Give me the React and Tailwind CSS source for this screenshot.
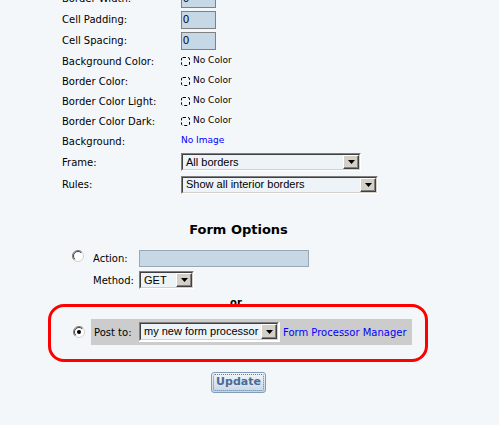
import React from "react";

const Radio = ({ checked }) => (
  <svg width="12" height="12" viewBox="0 0 12 12" className="shrink-0">
    <circle cx="6" cy="6" r="5.5" fill="#ffffff" stroke="#d4d0c8" />
    <path d="M2.1 9.9 A5.5 5.5 0 0 1 9.9 2.1" fill="none" stroke="#808080" />
    <path d="M2.8 9.2 A4.5 4.5 0 0 1 9.2 2.8" fill="none" stroke="#404040" />
    {checked && <circle cx="6" cy="6" r="2" fill="#000000" />}
  </svg>
);

const NoColor = () => (
  <span className="flex items-center gap-[3px]">
    <svg width="9" height="9" viewBox="0 0 9 9">
      <rect x="0.5" y="0.5" width="8" height="8" rx="1.5" fill="none" stroke="#000" strokeDasharray="3 2" />
    </svg>
    <span className="text-[9px]">No Color</span>
  </span>
);

const Select = ({ className, text }) => (
  <div className={`flex border border-t-[#808080] border-l-[#808080] border-b-white border-r-white ${className}`}>
    <div className="flex flex-1 items-center border border-t-[#404040] border-l-[#404040] border-b-[#d4d0c8] border-r-[#d4d0c8] bg-[#edf3f7]">
      <span className="flex-1 truncate pl-[3px] font-['Liberation_Sans',Arial,sans-serif] text-[11px] leading-none">
        {text}
      </span>
      <span className="flex h-full w-[16px] items-center justify-center border border-t-white border-l-white border-b-[#404040] border-r-[#404040] bg-[#d4d0c8] shadow-[inset_-1px_-1px_0_#808080]">
        <svg width="7" height="4" viewBox="0 0 7 4">
          <polygon points="0,0 7,0 3.5,4" fill="#000" />
        </svg>
      </span>
    </div>
  </div>
);

const NumInput = () => (
  <div className="flex h-[18px] w-[35px] items-center border border-[#808080] bg-[#c6d8e6] pl-[1px] font-['Liberation_Sans',Arial,sans-serif] text-[11px]">
    0
  </div>
);

const rows = [
  { label: "Border Width:", value: <NumInput />, h: "h-[21px]" },
  { label: "Cell Padding:", value: <NumInput />, h: "h-[21px]" },
  { label: "Cell Spacing:", value: <NumInput />, h: "h-[21px]" },
  { label: "Background Color:", value: <NoColor />, h: "h-[20px]" },
  { label: "Border Color:", value: <NoColor />, h: "h-[20px]" },
  { label: "Border Color Light:", value: <NoColor />, h: "h-[20px]" },
  { label: "Border Color Dark:", value: <NoColor />, h: "h-[20px]" },
  {
    label: "Background:",
    value: <span className="text-[9px] text-[#0000ff]">No Image</span>,
    h: "h-[20px]",
  },
  {
    label: "Frame:",
    value: <Select className="h-[18px] w-[180px]" text="All borders" />,
    h: "h-[22px]",
  },
  {
    label: "Rules:",
    value: <Select className="h-[18px] w-[197px]" text="Show all interior borders" />,
    h: "h-[23px]",
  },
];

export default function App() {
  return (
    <div className="h-[425px] w-[499px] overflow-hidden bg-[#f4f7fa] font-['DejaVu_Sans',sans-serif] text-[10px] text-black">
      <div className="mt-[-12px] w-[477px]">
        {rows.map((r) => (
          <div key={r.label} className={`flex items-center pl-[62px] ${r.h}`}>
            <span className="w-[119px]">{r.label}</span>
            {r.value}
          </div>
        ))}

        <div className="mt-[26px] h-[16px] text-center text-[13px] font-bold leading-[16px]">
          Form Options
        </div>

        <div className="mt-[12px] flex items-start pl-[72px]">
          <Radio />
          <div className="ml-[9px] flex flex-col">
            <div className="flex h-[17px] items-center">
              <span className="w-[46px]">Action:</span>
              <div className="h-[17px] w-[170px] border border-[#9aa8b4] bg-[#c6d8e6]" />
            </div>
            <div className="mt-[4px] flex h-[18px] items-center">
              <span className="w-[46px]">Method:</span>
              <Select className="h-[18px] w-[55px]" text="GET" />
            </div>
          </div>
        </div>

        <div className="mt-[8px] h-[12px] pr-[5px] text-center text-[10px] font-bold leading-[12px]">
          or
        </div>

        <div className="relative mt-[-5px] ml-[48px] flex h-[58px] w-[380px] items-center rounded-[16px] border-[3px] border-[#ff0000] pl-[22px] pb-[2px]">
          <Radio checked />
          <div className="ml-[6px] flex h-[26px] w-[321px] items-center bg-[#cccccc] pl-[3px]">
            <span className="w-[45px]">Post to:</span>
            <div className="border-r border-b border-white">
              <Select className="h-[19px] w-[140px]" text="my new form processor" />
            </div>
            <span className="ml-[3px] text-[#0000ff]">Form Processor Manager</span>
          </div>
        </div>

        <div className="mt-[10px] flex justify-center">
          <button className="flex h-[21px] w-[55px] items-center justify-center rounded-[3px] border border-[#7f9db9] bg-gradient-to-b from-[#f2f6fa] to-[#c6d6e6] p-[1px]">
            <span className="flex h-full w-full items-center justify-center rounded-[2px] border border-dotted border-[#5a7ca8] text-[11px] font-bold text-[#4a6b96]">
              Update
            </span>
          </button>
        </div>
      </div>
    </div>
  );
}
